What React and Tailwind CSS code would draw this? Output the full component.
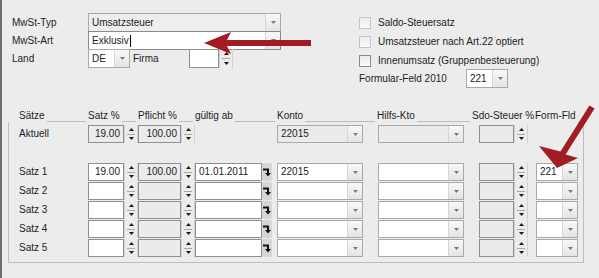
import React from "react";

const Tri = ({ up, fill = "#1a1a1a" }) => (
  <svg width="5" height="3" viewBox="0 0 5 3">
    <path d={up ? "M0 3L2.5 0L5 3Z" : "M0 0H5L2.5 3Z"} fill={fill} />
  </svg>
);

function Combo({ className, value, bg = "bg-white", children }) {
  return (
    <div className={`${className} h-full flex border border-[#a9a9a9] ${bg}`}>
      <div className="flex-1 flex items-center px-[3px] overflow-hidden whitespace-nowrap">
        {value}
        {children}
      </div>
      <div className="w-[15px] flex items-center justify-center border-l border-[#d6d6d6] bg-linear-to-b from-[#f8f8f8] to-[#e4e4e4]">
        <Tri fill="#7a7a7a" />
      </div>
    </div>
  );
}

function Box({ className, value, right, disabled }) {
  return (
    <div
      className={`${className} h-full flex items-center px-[3px] border border-[#8f8f8f] ${
        disabled ? "bg-[#ebebeb]" : "bg-white"
      } ${right ? "justify-end" : ""}`}
    >
      {value}
    </div>
  );
}

function Spin() {
  return (
    <div className="w-[14px] h-full flex flex-col border-x border-[#d2d2d2]">
      <div className="flex-1 flex items-center justify-center">
        <Tri up />
      </div>
      <div className="h-px bg-[#a8a8a8] mx-[2px]" />
      <div className="flex-1 flex items-center justify-center">
        <Tri />
      </div>
    </div>
  );
}

function DateBtn() {
  return (
    <div className="w-[10px] h-full flex items-center justify-center bg-[#d6d6d6] rounded-[2px]">
      <svg width="8" height="9" viewBox="0 0 8 9">
        <path d="M0 0.5H6V5H8L5 8.5L2 5H4V2.5H0Z" fill="#111" />
      </svg>
    </div>
  );
}

function Check({ dark }) {
  return (
    <div
      className={`w-[12px] h-[12px] border ${
        dark ? "border-[#8a8a8a]" : "border-[#c4c4c4]"
      } bg-linear-to-b from-[#ececec] to-[#fafafa]`}
    />
  );
}

function Head({ className, label, line = true, pad = "" }) {
  return (
    <div className={`${className} h-full flex items-end`}>
      <span className={`pb-[1px] whitespace-nowrap ${pad}`}>{label}</span>
      {line && <div className="flex-1 border-b border-[#bdbdbd] mx-[2px]" />}
    </div>
  );
}

function SatzRow({ label, satz = "", datum = "", konto = "", form = "", mt = "mt-px" }) {
  return (
    <div className={`flex h-[18px] ${mt}`}>
      <div className="w-[79px] pl-[10px] flex items-center">{label}</div>
      <Box className="w-[36px]" value={satz} right />
      <Spin />
      <Box className="w-[43px]" value={satz ? "100.00" : ""} right disabled />
      <Spin />
      <Box className="w-[67px]" value={datum} />
      <DateBtn />
      <div className="w-[5px]" />
      <Combo className="w-[86px]" value={konto} />
      <div className="w-[15px]" />
      <Combo className="w-[86px]" />
      <div className="w-[15px]" />
      <Box className="w-[35px]" disabled />
      <Spin />
      <div className="w-[8px]" />
      <Combo className="w-[42px]" value={form} />
    </div>
  );
}

export default function App() {
  return (
    <div className="relative w-[599px] h-[278px] overflow-hidden bg-[#ececec] border-l-2 border-[#6e6e6e] font-['Liberation_Sans',Arial,sans-serif] text-[10px] leading-none text-[#1c1c1c]">
      {/* top fields */}
      <div className="flex pt-[13px] h-[109px]">
        <div className="w-[357px] pl-[10px] flex flex-col">
          <div className="flex h-[19px]">
            <div className="w-[76px] flex items-center">MwSt-Typ</div>
            <Combo className="w-[193px]" value="Umsatzsteuer" bg="bg-[#eeeeee]" />
          </div>
          <div className="flex h-[19px] -mt-px">
            <div className="w-[76px] flex items-center">MwSt-Art</div>
            <Combo className="w-[193px] !border-[#8a8a8a]" value="Exklusiv">
              <span className="inline-block w-px h-[12px] bg-black ml-px" />
            </Combo>
          </div>
          <div className="flex h-[19px] -mt-px">
            <div className="w-[76px] flex items-center">Land</div>
            <Combo className="w-[42px]" value="DE" />
            <div className="w-[59px] pl-[3px] flex items-center">Firma</div>
            <Box className="w-[30px]" />
            <Spin />
          </div>
        </div>
        <div className="flex flex-col">
          <div className="flex h-[19px] items-center gap-[7px]">
            <Check />
            <span>Saldo-Steuersatz</span>
          </div>
          <div className="flex h-[19px] items-center gap-[7px]">
            <Check />
            <span>Umsatzsteuer nach Art.22 optiert</span>
          </div>
          <div className="flex h-[19px] items-center gap-[7px]">
            <Check dark />
            <span>Innenumsatz (Gruppenbesteuerung)</span>
          </div>
          <div className="flex h-[19px] -mt-px">
            <div className="w-[107px] flex items-center">Formular-Feld 2010</div>
            <Combo className="w-[42px]" value="221" />
          </div>
        </div>
      </div>

      {/* Sätze frame */}
      <div className="ml-[6px] w-[576px]">
        <div className="flex h-[13px]">
          <Head className="w-[80px]" label="Sätze" pad="pl-[11px]" />
          <Head className="w-[50px]" label="Satz %" />
          <Head className="w-[57px]" label="Pflicht %" />
          <Head className="w-[82px]" label="gültig ab" />
          <Head className="w-[100px]" label="Konto" />
          <Head className="w-[95px]" label="Hilfs-Kto" />
          <Head className="w-[63px]" label="Sdo-Steuer %" line={false} />
          <Head className="w-[49px]" label="Form-Fld" />
        </div>
        <div className="border-x border-b border-[#bdbdbd] pt-[3px] pb-[5px]">
          <div className="flex h-[18px]">
            <div className="w-[79px] pl-[10px] flex items-center">Aktuell</div>
            <Box className="w-[36px]" value="19.00" right disabled />
            <Spin />
            <Box className="w-[43px]" value="100.00" right disabled />
            <Spin />
            <div className="w-[82px]" />
            <Combo className="w-[86px]" value="22015" bg="bg-[#ebebeb]" />
            <div className="w-[15px]" />
            <Combo className="w-[86px]" bg="bg-[#ebebeb]" />
            <div className="w-[15px]" />
            <Box className="w-[35px]" disabled />
            <Spin />
          </div>
          <SatzRow label="Satz 1" satz="19.00" datum="01.01.2011" konto="22015" form="221" mt="mt-[20px]" />
          <SatzRow label="Satz 2" />
          <SatzRow label="Satz 3" />
          <SatzRow label="Satz 4" />
          <SatzRow label="Satz 5" />
        </div>
      </div>

      {/* red annotation arrows */}
      <svg className="absolute left-[-2px] top-0 pointer-events-none" width="599" height="278">
        <polygon points="204,43 231,32 227,40 311,40 311,46 227,46 231,54" fill="#a11d23" />
        <polygon
          points="557,168 578,158 565.6,154.6 594.6,108.6 589.4,105.4 560.5,151.4 539,146"
          fill="#a11d23"
        />
      </svg>
    </div>
  );
}
